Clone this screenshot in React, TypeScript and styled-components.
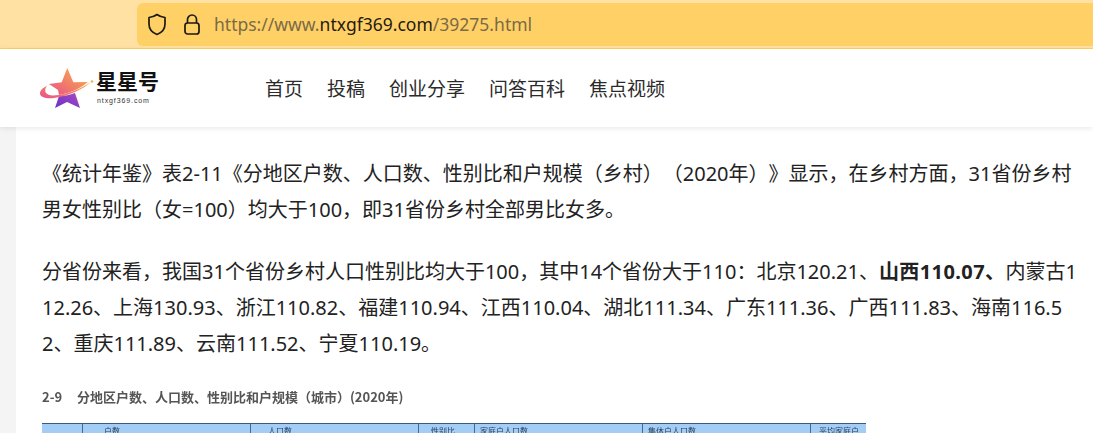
import React from "react";
import styled, { createGlobalStyle } from "styled-components";

const GlobalStyle = createGlobalStyle`
  html, body {
    margin: 0;
    padding: 0;
    height: 433px;
    overflow: hidden;
    background: #f4f4f4;
    font-family: "Noto Sans CJK SC", "Noto Sans", sans-serif;
    text-spacing-trim: space-all;
  }
`;

const BrowserBar = styled.div`
  height: 49px;
  box-sizing: border-box;
  padding: 3px 0 2px 137px;
  background: #ffe2a3;
  border-bottom: 1px solid #ffd166;
`;

const AddressBar = styled.div`
  height: 43px;
  display: flex;
  align-items: center;
  padding-left: 10px;
  background: #ffd066;
  border-radius: 6px 0 0 6px;
`;

const ShieldIcon = styled.svg`
  flex: none;
  width: 20px;
  height: 23px;
  margin-right: 16px;
  fill: none;
  stroke: #1c1a14;
  stroke-width: 1.7;
  stroke-linejoin: round;
`;

const LockIcon = styled(ShieldIcon)`
  width: 18px;
  margin-right: 13px;
`;

const Url = styled.div`
  font-family: "Noto Sans", sans-serif;
  font-size: 17.5px;
  line-height: 24px;
  margin-top: -2px;
  color: #7a6a45;
`;

const Host = styled.span`
  color: #1f1a10;
`;

const Header = styled.header`
  position: relative;
  z-index: 1;
  height: 78px;
  display: flex;
  align-items: center;
  background: #fff;
  box-shadow: 0 1px 6px rgba(0, 0, 0, 0.1);
`;

const Logo = styled.div`
  width: 265px;
  padding-left: 38px;
  box-sizing: border-box;
  display: flex;
  align-items: center;
`;

const LogoWords = styled.div`
  display: flex;
  flex-direction: column;
  margin-top: -4px;
`;

const LogoName = styled.div`
  font-family: "Noto Sans CJK SC", serif;
  font-weight: 700;
  font-size: 21px;
  line-height: 24px;
  color: #111;
`;

const LogoUrl = styled.div`
  font-family: "Liberation Sans", sans-serif;
  font-size: 7px;
  line-height: 9px;
  letter-spacing: 0.9px;
  color: #333;
  margin: 4px 0 0 1px;
`;

const Nav = styled.nav`
  display: flex;
  gap: 24px;
`;

const NavItem = styled.a`
  font-size: 19px;
  line-height: 28px;
  color: #2b2b2b;
`;

const Page = styled.div`
  margin-left: 16px;
  height: 306px;
  overflow: hidden;
  box-sizing: border-box;
  padding: 29px 13px 0 26px;
  background: #fff;
`;

const Paragraph = styled.p`
  margin: 0 0 26px;
  font-family: "Noto Sans", "Noto Sans CJK SC", sans-serif;
  font-size: 20px;
  line-height: 36px;
  color: #222;
  word-break: break-all;
`;

const Strong = styled.b`
  letter-spacing: 0.4px;
`;

const Figure = styled.div`
  width: 824px;
  margin-top: 23px;
`;

const Caption = styled.div`
  font-size: 13px;
  line-height: 18px;
  font-weight: 700;
  color: #555;
  filter: blur(0.5px);
  white-space: pre;
`;

const TableHead = styled.div`
  margin-top: 17px;
  height: 30px;
  display: grid;
  grid-template-columns: 40px 168px 168px 56px 168px 168px 56px;
  background: #a4cdf6;
  border-top: 1.5px solid #3a5a80;
  filter: blur(0.5px);
`;

const HeadCell = styled.div<{ $first?: boolean; $pad: number }>`
  box-sizing: border-box;
  padding-left: ${(p) => p.$pad}px;
  border-left: ${(p) => (p.$first ? "none" : "1px solid #47688f")};
  font-size: 8px;
  line-height: 14px;
  color: #27415f;
  white-space: nowrap;
`;

const headers = [
  { label: "", pad: 0 },
  { label: "户数", pad: 21 },
  { label: "人口数", pad: 17 },
  { label: "性别比", pad: 12 },
  { label: "家庭户人口数", pad: 5 },
  { label: "集体户人口数", pad: 5 },
  { label: "平均家庭户", pad: 8 },
];

export default function App() {
  return (
    <>
      <GlobalStyle />
      <BrowserBar>
        <AddressBar>
          <ShieldIcon viewBox="0 0 20 23">
            <path d="M10 1.500c2.600 1.900 5 2.800 8 3v6.500c0 5-3.400 8.700-8 10.500-4.600-1.800-8-5.500-8-10.500V4.500c3-.2 5.400-1.100 8-3z" />
          </ShieldIcon>
          <LockIcon viewBox="0 0 18 23">
            <path d="M4.500 10V6.500a4.500 4.500 0 0 1 9 0V10" />
            <rect x="2" y="10" width="14" height="11" rx="2.500" />
          </LockIcon>
          <Url>
            https://www.<Host>ntxgf369.com</Host>/39275.html
          </Url>
        </AddressBar>
      </BrowserBar>
      <Header>
        <Logo>
          <svg width="58" height="48" viewBox="0 0 58 48">
            <defs>
              <linearGradient id="star" x1="0" y1="1" x2="1" y2="0">
                <stop offset="0" stopColor="#e8508a" />
                <stop offset="0.8" stopColor="#f9a24e" />
              </linearGradient>
              <linearGradient id="foot" x1="0" y1="1" x2="1" y2="0">
                <stop offset="0" stopColor="#6a30c8" />
                <stop offset="1" stopColor="#a84cc0" />
              </linearGradient>
            </defs>
            <path d="M17 44L21 32C27 32 32 31 37 29L42 44L29 38Z" fill="url(#foot)" />
            <path d="M29.300 4L35.300 18.300L50 18C44 23 36 28 21 31L20 26L11 20L23.700 18.300Z" fill="url(#star)" />
            <path d="M9 22C4 24 2 27 2 29.500C2 33 8 35 16 34C30 32 46 25 53 18C44 24 30 31 15 31.500C8 31.500 5 27 9 22Z" fill="url(#star)" />
            <circle cx="54" cy="17.500" r="1.300" fill="#f6b24c" />
          </svg>
          <LogoWords>
            <LogoName>星星号</LogoName>
            <LogoUrl>ntxgf369.com</LogoUrl>
          </LogoWords>
        </Logo>
        <Nav>
          <NavItem>首页</NavItem>
          <NavItem>投稿</NavItem>
          <NavItem>创业分享</NavItem>
          <NavItem>问答百科</NavItem>
          <NavItem>焦点视频</NavItem>
        </Nav>
      </Header>
      <Page>
        <Paragraph>
          《统计年鉴》表2-11《分地区户数、人口数、性别比和户规模（乡村）（2020年）》显示，在乡村方面，31省份乡村男女性别比（女=100）均大于100，即31省份乡村全部男比女多。
        </Paragraph>
        <Paragraph>
          分省份来看，我国31个省份乡村人口性别比均大于100，其中14个省份大于110：北京120.21、<Strong>山西110.07、</Strong>内蒙古112.26、上海130.93、浙江110.82、福建110.94、江西110.04、湖北111.34、广东111.36、广西111.83、海南116.52、重庆111.89、云南111.52、宁夏110.19。
        </Paragraph>
        <Figure>
          <Caption>2-9     分地区户数、人口数、性别比和户规模（城市）(2020年)</Caption>
          <TableHead>
            {headers.map((h, i) => (
              <HeadCell key={i} $first={i === 0} $pad={h.pad}>
                {h.label}
              </HeadCell>
            ))}
          </TableHead>
        </Figure>
      </Page>
    </>
  );
}
